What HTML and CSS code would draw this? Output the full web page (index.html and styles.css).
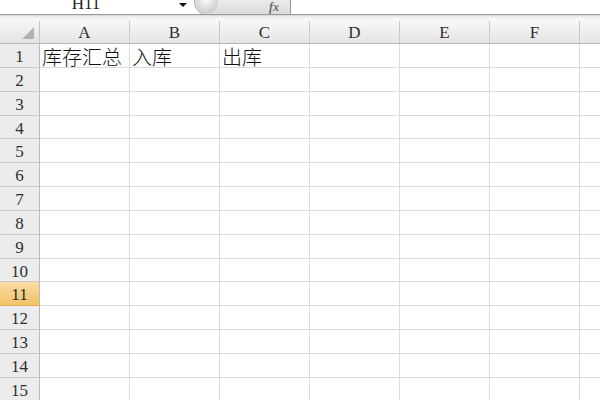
FILE: index.html
```html
<!DOCTYPE html>
<html>
<head>
  <meta charset="utf-8">
  <title>Book1</title>
  <link rel="stylesheet" href="styles.css">
</head>
<body>

  <div class="formula-bar">
    <div class="name-box">H11</div>
    <div class="name-drop"><span class="arrow"></span></div>
    <div class="fx-button"><span class="knob"></span><span class="fx">fx</span></div>
    <div class="formula-input"></div>
  </div>
  <div class="bar-shadow"></div>

  <div class="sheet" id="sheet"></div>

  <script type="text/javascript">
  //Column letters shown across the top (the last column only peeks in).
  var cols = ['A','B','C','D','E','F','']
  //Number of rows to draw.
  var rows = 15
  //The row that holds the active cell.
  var activeRow = 11
  //Cell values, by row.
  var data = {
    1: ['库存汇总', '入库', '出库']
  }

  var sheet = document.getElementById("sheet")

  function addCell(cls, text){
    var c = document.createElement("div")
    c.className = cls
    if (text) c.innerText = text
    sheet.appendChild(c)
  }

  //header row
  addCell("corner")
  for (var i = 0; i < cols.length; ++i) {
    addCell("col-head", cols[i])
  }

  //body rows
  for (var r = 1; r <= rows; ++r) {
    addCell(r == activeRow ? "row-head active" : "row-head", "" + r)
    var vals = data[r] || []
    for (var i = 0; i < cols.length; ++i) {
      addCell("cell", vals[i])
    }
  }
  </script>
</body>
</html>
```

FILE: styles.css
```css
body {
  margin: 0;
  width: 600px;
  height: 400px;
  overflow: hidden;
  background: #fff;
  font-family: "Liberation Serif", serif;
  color: #2e2e2e;
}

/* formula bar, cut off at the top */
.formula-bar {
  display: flex;
  height: 14px;
  border-bottom: 1px solid #9b9b9b;
  background: #fff;
  overflow: hidden;
}

.name-box {
  width: 172px;
  text-align: center;
  font-size: 17px;
  line-height: 8px;
  color: #222;
}

.name-drop {
  width: 22px;
  display: flex;
  justify-content: center;
}

.arrow {
  margin-top: 3px;
  width: 0;
  height: 0;
  border-left: 4px solid transparent;
  border-right: 4px solid transparent;
  border-top: 4px solid #111;
}

.fx-button {
  position: relative;
  width: 97px;
  height: 26px;
  margin-top: -11px;
  border: 1px solid #b4b4b4;
  border-right-color: #9a9a9a;
  border-radius: 14px 0 0 14px;
  background: linear-gradient(to bottom, #f4f4f4, #dcdcdc);
  box-sizing: border-box;
}

.knob {
  position: absolute;
  left: 1px;
  top: 1px;
  width: 22px;
  height: 22px;
  border-radius: 50%;
  background: radial-gradient(circle at 45% 40%, #fbfbfb, #d2d2d2 65%, #b4b4b4);
}

.fx {
  position: absolute;
  right: 11px;
  top: 10px;
  font-size: 12px;
  font-style: italic;
  font-weight: bold;
  color: #6a6a6a;
}

.formula-input {
  flex: 1;
  background: #fff;
}

.bar-shadow {
  height: 6px;
  background: linear-gradient(to bottom, #d4d4d4, #f3f3f3 35%, #f7f7f7);
}

/* the worksheet grid */
.sheet {
  display: grid;
  grid-template-columns: 40px repeat(7, 90px);
  grid-template-rows: 23px;
  grid-auto-rows: 23.85px;
  width: 600px;
  overflow: hidden;
}

.corner,
.col-head,
.row-head,
.cell {
  box-sizing: border-box;
  border-right: 1px solid #dadbe5;
  border-bottom: 1px solid #dadbe5;
  white-space: nowrap;
}

.corner {
  position: relative;
  background: linear-gradient(to bottom, #f6f6f6, #e3e3e3);
  border-right-color: #c4c4c4;
  border-bottom-color: #b5b5b5;
}

.corner::after {
  content: "";
  position: absolute;
  right: 5px;
  bottom: 4px;
  width: 0;
  height: 0;
  border-left: 12px solid transparent;
  border-bottom: 12px solid #b3b3b3;
}

.col-head {
  background: linear-gradient(to bottom, #f7f7f7, #e4e4e4);
  border-right-color: #cacaca;
  border-bottom-color: #b5b5b5;
  text-align: center;
  font-size: 17px;
  line-height: 23px;
}

.row-head {
  background: #ececec;
  border-right-color: #b9b9b9;
  border-bottom-color: #c9c9c9;
  text-align: center;
  font-size: 17px;
  line-height: 25px;
}

.row-head.active {
  background: linear-gradient(to bottom, #f9dca3, #f2c266);
  border-bottom-color: #dfae55;
  color: #2a2a2a;
}

.cell {
  padding-left: 2px;
  font-family: "Noto Sans CJK SC", sans-serif;
  font-size: 20px;
  font-weight: 300;
  line-height: 26px;
  color: #111;
}
```
